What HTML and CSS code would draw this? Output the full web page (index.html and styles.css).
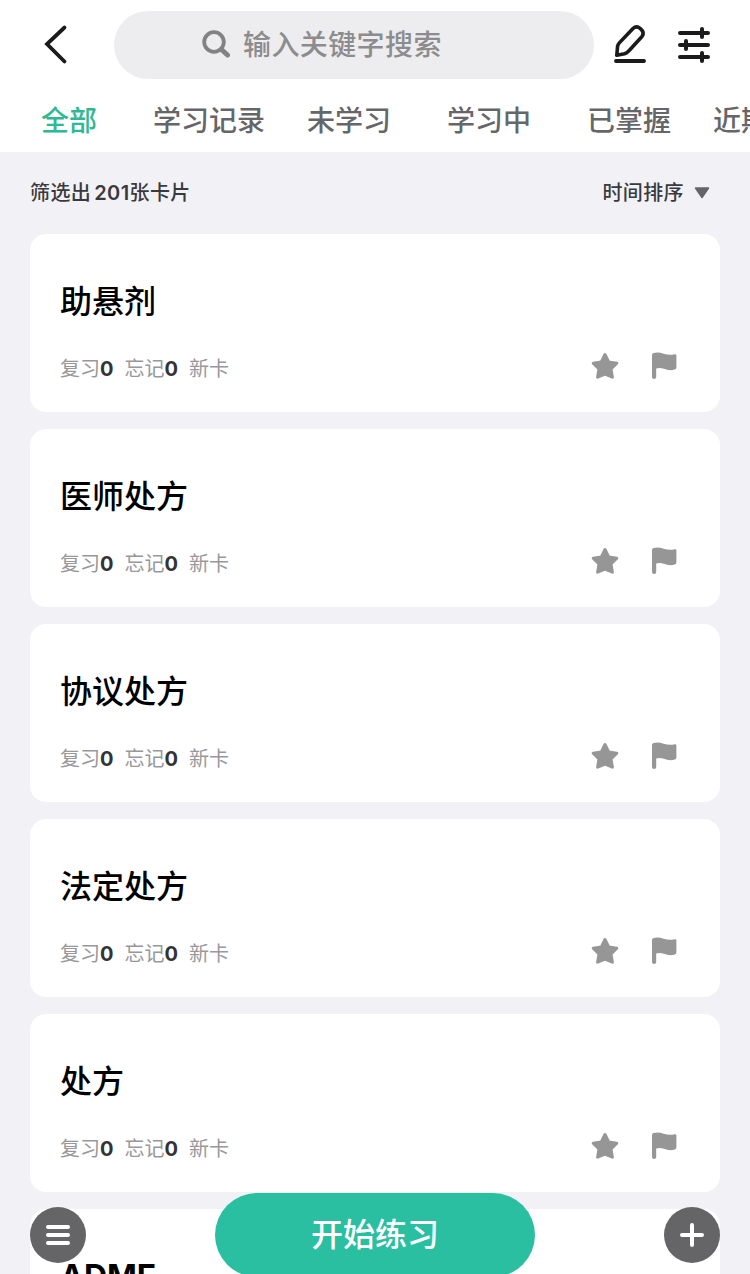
FILE: index.html
```
<!DOCTYPE html>
<html lang="zh-CN">
<head>
<meta charset="utf-8">
<title>卡片</title>
<link rel="stylesheet" href="styles.css">
<script src="cards.js" defer></script>
</head>
<body>
<svg class="symbols" aria-hidden="true">
  <symbol id="star" viewBox="0 0 30 30"><path d="M15 3.5 L18.7 11 L26.8 12.2 L21 18 L22.4 26.2 L15 23.2 L7.6 26.2 L9 18 L3.2 12.2 L11.3 11 Z" fill="#969696" stroke="#969696" stroke-width="3" stroke-linejoin="round"/></symbol>
  <symbol id="flag" viewBox="0 0 30 30"><path d="M2 3.8 Q2 2.4 3.6 2 Q8.5 0.6 13.5 2.8 Q19.5 4.6 24.6 3.3 Q26.4 3 26.4 4.6 V16.6 Q26.4 18.2 24.8 18.6 Q19 20 14 17.8 Q10 16.4 6.2 17.4 V26 Q6.2 28 4.1 28 Q2 28 2 26 Z" fill="#969696"/></symbol>
</svg>
<div class="screen">
  <header class="header">
    <div class="bar">
      <svg class="back" viewBox="0 0 30 44"><path d="M24.5 5.5 L7 22 L24.5 39.500" fill="none" stroke="#1b1b1d" stroke-width="3.800" stroke-linecap="round"/></svg>
      <div class="search">
        <svg class="lens" viewBox="0 0 30 30"><circle cx="13" cy="13" r="9.800" fill="none" stroke="#828284" stroke-width="3.800"/><path d="M20.500 20.500 L26.500 26" stroke="#828284" stroke-width="5" stroke-linecap="round"/></svg>
        <span>输入关键字搜索</span>
      </div>
      <svg class="edit" viewBox="0 0 36 42"><path d="M4.800 33.300 L5.600 24.200 Q6 22.300 7.300 20.900 L21 6.500 Q24.400 3.400 28.400 6.600 Q33 10.500 30 14.500 L16.500 29.200 Q15 31 12.500 31.800 Z" fill="none" stroke="#1b1b1d" stroke-width="3.600" stroke-linejoin="round"/><path d="M4 39 H32" stroke="#1b1b1d" stroke-width="3.900" stroke-linecap="round"/></svg>
      <svg class="sliders" viewBox="0 0 36 42"><path d="M4 7 H32 M4 19 H32 M4 31 H32 M26 3 V11 M10 15 V23 M26 27 V35" stroke="#1b1b1d" stroke-width="4" stroke-linecap="round"/></svg>
    </div>
    <nav class="tabs">
      <span class="tab active">全部</span><span class="tab">学习记录</span><span class="tab">未学习</span><span class="tab">学习中</span><span class="tab">已掌握</span><span class="tab cut">近期</span>
    </nav>
  </header>
  <div class="summary">
    <span class="count">筛选出<b>201</b>张卡片</span>
    <span class="sort">时间排序<svg class="caret" viewBox="0 0 16 12"><path d="M1.500 1 H14.500 L8 10.500 Z" fill="#656569" stroke="#656569" stroke-width="1.500" stroke-linejoin="round"/></svg></span>
  </div>
  <main class="cards" id="cards"></main>
  <div class="fab left"><svg viewBox="0 0 56 56"><path d="M18 20 H38 M18 28 H38 M18 36 H38" stroke="#fff" stroke-width="4" stroke-linecap="round"/></svg></div>
  <div class="start">开始练习</div>
  <div class="fab right"><svg viewBox="0 0 56 56"><path d="M18 28 H38 M28 18 V38" stroke="#fff" stroke-width="4" stroke-linecap="round"/></svg></div>
</div>
</body>
</html>
```

FILE: styles.css
```
* { box-sizing: border-box; }
body {
  margin: 0;
  background: #f2f2f6;
  font-family: Inter, "Noto Sans CJK SC", sans-serif;
  overflow: hidden;
}
svg { display: block; flex: none; }
.symbols { position: absolute; width: 0; height: 0; }
.screen { position: relative; width: 750px; height: 1274px; overflow: hidden; }
.header { height: 152px; background: #fff; }
.bar { display: flex; height: 90px; padding: 11px 0 0 40px; }
.back { width: 30px; height: 44px; margin-top: 11px; }
.search {
  display: flex;
  width: 480px;
  height: 68px;
  margin-left: 44px;
  padding-left: 87px;
  border-radius: 34px;
  background: #ededef;
  color: #8c8c8e;
  font-size: 28px;
  line-height: 68px;
  letter-spacing: 0.4px;
  font-weight: 500;
}
.lens { width: 30px; height: 30px; margin: 18px 12px 0 0; }
.edit { width: 36px; height: 42px; margin: 11px 0 0 18px; }
.sliders { width: 36px; height: 42px; margin: 15px 0 0 28px; }
.tabs { display: flex; margin-left: -1px; }
.tab {
  flex: none;
  width: 140px;
  text-align: center;
  color: #666668;
  font-size: 28px;
  line-height: 62px;
  font-weight: 500;
}
.tab.active { color: #2fb894; font-weight: 500; }
.tab.cut { padding-left: 14px; text-align: left; }
.summary {
  display: flex;
  justify-content: space-between;
  height: 81.5px;
  padding: 0 40px 0 30px;
  color: #3a3a3e;
  font-size: 20px;
  line-height: 82px;
  font-weight: 500;
}
.count { letter-spacing: 0.4px; }
.count b { margin-left: 3px; font-weight: 600; }
.sort { display: flex; align-items: center; letter-spacing: 0.4px; }
.caret { width: 16px; height: 12px; margin: 1px 0 0 10px; }
.cards { display: flex; flex-direction: column; gap: 16.5px; padding: 0 30px; }
.card {
  height: 178.5px;
  flex: none;
  padding: 44px 40px 0 30px;
  border-radius: 16px;
  background: #fff;
}
.title { color: #000; font-size: 32px; line-height: 48px; font-weight: 500; }
.title.latin { font-weight: 700; }
.row { display: flex; justify-content: space-between; margin-top: 23px; }
.meta { display: flex; gap: 11px; color: #98989a; font-size: 20px; line-height: 40px; }
.meta b { color: #333335; font-weight: 700; }
.icons { display: flex; gap: 30px; }
.icons svg { width: 30px; height: 30px; margin-top: 2px; }
.fab { position: absolute; top: 1207px; width: 56px; height: 56px; border-radius: 50%; background: #656568; }
.fab.left { left: 30px; }
.fab.right { left: 664px; }
.start {
  position: absolute;
  left: 215px;
  top: 1193px;
  width: 320px;
  height: 84px;
  border-radius: 42px;
  background: #2abfa1;
  color: #fff;
  font-size: 32px;
  line-height: 84px;
  font-weight: 500;
  text-align: center;
}
```

FILE: cards.js
```
const titles = ['助悬剂', '医师处方', '协议处方', '法定处方', '处方', 'ADME'];
document.getElementById('cards').innerHTML = titles.map(t => `
  <article class="card">
    <div class="title${/^[A-Z]/.test(t) ? ' latin' : ''}">${t}</div>
    <div class="row">
      <div class="meta"><span>复习<b>0</b></span><span>忘记<b>0</b></span><span>新卡</span></div>
      <div class="icons"><svg><use href="#star"/></svg><svg><use href="#flag"/></svg></div>
    </div>
  </article>`).join('');
```
